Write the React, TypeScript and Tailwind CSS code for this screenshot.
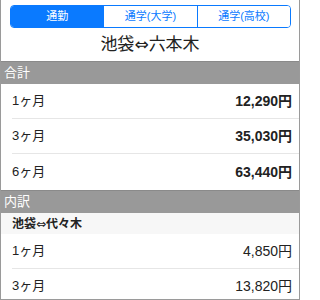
import React from "react";

const font = { fontFamily: '"Liberation Sans", "Noto Sans CJK JP", sans-serif' };

type Row = { label: string; price: string };

const totals: Row[] = [
  { label: "1ヶ月", price: "12,290円" },
  { label: "3ヶ月", price: "35,030円" },
  { label: "6ヶ月", price: "63,440円" },
];

const breakdown: Row[] = [
  { label: "1ヶ月", price: "4,850円" },
  { label: "3ヶ月", price: "13,820円" },
  { label: "6ヶ月", price: "26,190円" },
];

function Arrow() {
  return <span className="font-['DejaVu_Sans'] font-normal">⇔</span>;
}

function PriceRow({ row, bold, last }: { row: Row; bold?: boolean; last?: boolean }) {
  return (
    <div className="pl-[11px]">
      <div
        className={`flex items-center justify-between pr-[7px] text-[#222] ${
          last ? "h-[36px]" : "h-[35px] border-b border-[#e6e6e6]"
        }`}
      >
        <span className="text-[13px]">{row.label}</span>
        <span className={bold ? "text-[14px] font-bold" : "text-[14px]"}>{row.price}</span>
      </div>
    </div>
  );
}

function SectionHeader({ title }: { title: string }) {
  return (
    <div className="h-[23px] bg-[#999999] text-white text-[13px] flex items-center pl-[3px] border-t border-[#8a8a8a]">
      {title}
    </div>
  );
}

export default function App() {
  const tabs = ["通勤", "通学(大学)", "通学(高校)"];
  return (
    <div
      className="w-[300px] h-[300px] overflow-hidden bg-white border-l border-r border-b border-[#9a9a9a]"
      style={font}
    >
      {/* Tabs */}
      <div className="ml-[9px] mt-[5px] w-[281px] h-[23px] flex border border-[#0a7aff] rounded-[4px] overflow-hidden">
        {tabs.map((t, i) => (
          <div
            key={t}
            className={`flex-1 flex items-center justify-center text-[11px] ${
              i === 0 ? "bg-[#0a7aff] text-white" : "bg-white text-[#0a7aff]"
            } ${i > 0 ? "border-l border-[#0a7aff]" : ""}`}
          >
            {t}
          </div>
        ))}
      </div>

      {/* Route */}
      <div className="h-[33px] flex items-center justify-center text-[17px] text-[#222]">
        池袋<Arrow />六本木
      </div>

      <SectionHeader title="合計" />
      {totals.map((r, i) => (
        <PriceRow key={r.label} row={r} bold last={i === totals.length - 1} />
      ))}

      <SectionHeader title="内訳" />
      <div className="h-[21px] bg-[#f7f7f7] flex items-center pl-[11px] text-[12px] font-bold text-[#222]">
        池袋<Arrow />代々木
      </div>
      {breakdown.map((r) => (
        <PriceRow key={r.label} row={r} />
      ))}
    </div>
  );
}
